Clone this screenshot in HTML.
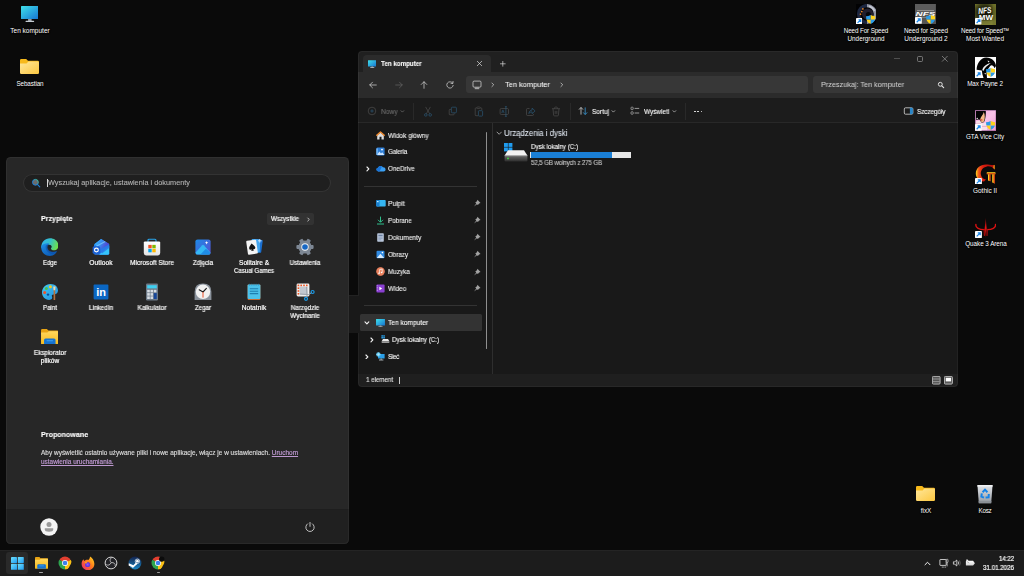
<!DOCTYPE html>
<html lang="pl">
<head>
<meta charset="utf-8">
<title>Pulpit</title>
<style>
html,body{margin:0;padding:0;background:#0a0a0a;}
body{width:1024px;height:576px;overflow:hidden;font-family:"Liberation Sans",sans-serif;}
#screen{position:relative;width:1024px;height:576px;overflow:hidden;background:#0a0a0a;}
#screen div,#screen span,#screen svg{position:absolute;}
.t{white-space:nowrap;display:block;}
.ds{text-shadow:0.5px 0.5px 1px #000,0 0 1.5px #000;}
.t:not(.ds){will-change:transform;}

</style>
</head>
<body>
<div id="screen">
<svg style="left:20.6px;top:5.6px;" width="17.7" height="16.4" viewBox="0 0 18 16.5"><linearGradient id="g1" x1="0" y1="0" x2="1" y2="1"><stop offset="0" stop-color="#3fe0ea"/><stop offset="1" stop-color="#1673d1"/></linearGradient><rect x="0" y="0" width="18" height="13.2" rx=".6" fill="url(#g1)"/><rect x="7.2" y="13.2" width="3.6" height="2" fill="#9aa3ab"/><rect x="4.6" y="15" width="8.8" height="1.2" rx=".5" fill="#c5ccd2"/></svg>
<span class="t ds" style="left:29.5px;top:26.98px;font-size:7px;line-height:8.75px;color:#fff;letter-spacing:0.000px;transform:translateX(-50%) scaleX(0.929);transform-origin:50% 50%;">Ten komputer</span>
<svg style="left:20px;top:59.3px;" width="19" height="15" viewBox="0 0 19 15"><linearGradient id="g2" x1="0" y1="0" x2="1" y2="1"><stop offset="0" stop-color="#ffe79a"/><stop offset="1" stop-color="#fcc740"/></linearGradient><path d="M0 1.2Q0 0 1.2 0H6.2L8 1.8H17.8Q19 1.8 19 3V6H0Z" fill="#f7b91b"/><path d="M0 4.4L6.6 4.4L8.4 2.6H17.8Q19 2.6 19 3.8V13.8Q19 15 17.8 15H1.2Q0 15 0 13.8Z" fill="url(#g2)"/></svg>
<span class="t ds" style="left:29.5px;top:80.23px;font-size:7px;line-height:8.75px;color:#fff;letter-spacing:-0.127px;transform:translateX(-50%) scaleX(0.900);transform-origin:50% 50%;">Sebastian</span>
<svg style="left:855.6px;top:4.1px;" width="20.7" height="20.3" viewBox="0 0 20.7 20.3"><rect width="20.7" height="20.3" fill="#020203"/><path d="M11 1.6A8.4 8.4 0 0 0 11 18.4" fill="none" stroke="#1d2740" stroke-width="3.4"/><path d="M11 1.6A8.4 8.4 0 0 1 11 18.4" fill="none" stroke="#9296a4" stroke-width="3.2"/><path d="M13 2.2A8.2 8.2 0 0 1 18.6 7" fill="none" stroke="#c4c8d4" stroke-width="1.6"/><circle cx="11.6" cy="10" r="5.6" fill="#211f2e"/><circle cx="12.4" cy="10.6" r="2.6" fill="#06060a"/><circle cx="6.9" cy="4.9" r=".85" fill="#f08a2a"/><circle cx="5.8" cy="7.6" r=".85" fill="#f08a2a"/><circle cx="4.5" cy="10.2" r=".85" fill="#e07a22"/></svg>
<svg style="left:855.6px;top:18.1px;" width="6.3" height="6.3" viewBox="0 0 8 8"><rect width="8" height="8" rx=".5" fill="#fdfdfd"/><path d="M2 6.2L5.2 3M3.2 2.2H6V5" fill="none" stroke="#1a86e8" stroke-width="1.5"/></svg>
<svg style="left:866.3px;top:14.8px;" width="9.5" height="9.0" viewBox="0 0 10 10" preserveAspectRatio="none"><clipPath id="g3"><path d="M5 0C6.6 .9 8.4 1.3 10 1.3C10 5.6 8.6 8.4 5 10C1.4 8.4 0 5.6 0 1.3C1.6 1.3 3.4 .9 5 0Z"/></clipPath><g clip-path="url(#g3)"><rect width="5" height="5.2" fill="#2a9be6"/><rect x="5" width="5" height="5.2" fill="#ffd21a"/><rect y="5.2" width="5" height="4.8" fill="#ffd21a"/><rect x="5" y="5.2" width="5" height="4.8" fill="#2a9be6"/></g></svg>
<span class="t ds" style="left:866px;top:26.98px;font-size:7px;line-height:8.75px;color:#fff;letter-spacing:-0.138px;transform:translateX(-50%) scaleX(0.900);transform-origin:50% 50%;">Need For Speed</span>
<span class="t ds" style="left:866px;top:34.98px;font-size:7px;line-height:8.75px;color:#fff;letter-spacing:0.000px;transform:translateX(-50%) scaleX(0.905);transform-origin:50% 50%;">Underground</span>
<svg style="left:915.1px;top:3.9px;" width="20.9" height="20.4" viewBox="0 0 20.9 20.4"><rect width="20.9" height="20.4" fill="#5c5c5c"/><rect y="12.6" width="20.9" height="7.8" fill="#545454"/><rect x="2" y="6.1" width="17" height=".55" fill="#bdbdbd"/><rect x="7" y="13" width="5" height=".5" fill="#a8a8a8"/><text x="10.4" y="11.9" font-family="Liberation Sans, sans-serif" font-size="6" font-weight="700" font-style="italic" fill="#fff" text-anchor="middle" textLength="19.6" lengthAdjust="spacingAndGlyphs">NFS</text></svg>
<svg style="left:915.1px;top:17.4px;" width="6.8" height="6.8" viewBox="0 0 8 8"><rect width="8" height="8" rx=".5" fill="#fdfdfd"/><path d="M2 6.2L5.2 3M3.2 2.2H6V5" fill="none" stroke="#1a86e8" stroke-width="1.5"/></svg>
<svg style="left:926.0px;top:14.8px;" width="9.5" height="9.0" viewBox="0 0 10 10" preserveAspectRatio="none"><clipPath id="g4"><path d="M5 0C6.6 .9 8.4 1.3 10 1.3C10 5.6 8.6 8.4 5 10C1.4 8.4 0 5.6 0 1.3C1.6 1.3 3.4 .9 5 0Z"/></clipPath><g clip-path="url(#g4)"><rect width="5" height="5.2" fill="#2a9be6"/><rect x="5" width="5" height="5.2" fill="#ffd21a"/><rect y="5.2" width="5" height="4.8" fill="#ffd21a"/><rect x="5" y="5.2" width="5" height="4.8" fill="#2a9be6"/></g></svg>
<span class="t ds" style="left:925.5px;top:26.98px;font-size:7px;line-height:8.75px;color:#fff;letter-spacing:-0.011px;transform:translateX(-50%) scaleX(0.900);transform-origin:50% 50%;">Need for Speed</span>
<span class="t ds" style="left:925.5px;top:34.98px;font-size:7px;line-height:8.75px;color:#fff;letter-spacing:0.000px;transform:translateX(-50%) scaleX(0.931);transform-origin:50% 50%;">Underground 2</span>
<svg style="left:974.9px;top:3.6px;" width="21.3" height="21.2" viewBox="0 0 21.3 21.2"><radialGradient id="g5" cx=".45" cy=".42" r=".6"><stop offset="0" stop-color="#0c0c06"/><stop offset=".55" stop-color="#2a2b10"/><stop offset="1" stop-color="#70722a"/></radialGradient><rect width="21.3" height="21.2" fill="url(#g5)"/><rect x="7" y="16.4" width="14.3" height="4.8" fill="#85873a" opacity=".75"/><rect x="17.6" y="0" width="3.7" height="21.2" fill="#6e7028" opacity=".55"/><text x="9.8" y="9.4" font-family="Liberation Sans, sans-serif" font-size="8.4" font-weight="700" font-style="italic" fill="#fff" text-anchor="middle" textLength="13.4" lengthAdjust="spacingAndGlyphs" transform="rotate(-6 9.8 6)">NFS</text><text x="10.9" y="15.9" font-family="Liberation Sans, sans-serif" font-size="6.4" font-weight="700" fill="#fff" text-anchor="middle" textLength="14.2" lengthAdjust="spacingAndGlyphs">MW</text></svg>
<svg style="left:975.1px;top:18.0px;" width="6.5" height="6.5" viewBox="0 0 8 8"><rect width="8" height="8" rx=".5" fill="#fdfdfd"/><path d="M2 6.2L5.2 3M3.2 2.2H6V5" fill="none" stroke="#1a86e8" stroke-width="1.5"/></svg>
<span class="t ds" style="left:985.2px;top:26.88px;font-size:7px;line-height:8.75px;color:#fff;letter-spacing:-0.181px;transform:translateX(-50%) scaleX(0.900);transform-origin:50% 50%;">Need for Speed™</span>
<span class="t ds" style="left:984.8px;top:34.78px;font-size:7px;line-height:8.75px;color:#fff;letter-spacing:0.000px;transform:translateX(-50%) scaleX(0.927);transform-origin:50% 50%;">Most Wanted</span>
<svg style="left:974.9px;top:56.9px;" width="21.3" height="21.2" viewBox="0 0 21.3 21.2"><rect width="21.3" height="21.2" fill="#fdfdfd"/><path d="M1.6 12.8C1.8 6 6 .6 11.2 .5C16.6 .5 20.6 4.4 21 9L19.6 11.2C18.2 8.2 16.4 7.6 15 9.2C13.6 11 12.4 13 11.6 15.2L12 21.2H8.6C7.6 18.4 7 15.8 6.8 13.4Z" fill="#030303"/><path d="M15.8 6C12 6.8 8.6 9 7.4 12.2C7.4 13.4 8 14 8.6 13.8C9.4 11 12.4 8.6 15.8 6Z" fill="#f4f4f4"/><path d="M12.6 3.6L14.6 4.2L13.2 5.4Z" fill="#e8e8e8"/><path d="M9 16.6L11 16V17.4Z" fill="#d0d0d0"/></svg>
<svg style="left:975.1px;top:71.1px;" width="6.7" height="6.7" viewBox="0 0 8 8"><rect width="8" height="8" rx=".5" fill="#fdfdfd"/><path d="M2 6.2L5.2 3M3.2 2.2H6V5" fill="none" stroke="#1a86e8" stroke-width="1.5"/></svg>
<svg style="left:986.0px;top:68.1px;" width="9.4" height="8.9" viewBox="0 0 10 10" preserveAspectRatio="none"><clipPath id="g6"><path d="M5 0C6.6 .9 8.4 1.3 10 1.3C10 5.6 8.6 8.4 5 10C1.4 8.4 0 5.6 0 1.3C1.6 1.3 3.4 .9 5 0Z"/></clipPath><g clip-path="url(#g6)"><rect width="5" height="5.2" fill="#2a9be6"/><rect x="5" width="5" height="5.2" fill="#ffd21a"/><rect y="5.2" width="5" height="4.8" fill="#ffd21a"/><rect x="5" y="5.2" width="5" height="4.8" fill="#2a9be6"/></g></svg>
<span class="t ds" style="left:985.4px;top:80.23px;font-size:7px;line-height:8.75px;color:#fff;letter-spacing:-0.119px;transform:translateX(-50%) scaleX(0.900);transform-origin:50% 50%;">Max Payne 2</span>
<svg style="left:974.9px;top:110.1px;" width="21.3" height="21" viewBox="0 0 21.3 21"><linearGradient id="g7" x1="0" y1="0" x2="1" y2="1"><stop offset="0" stop-color="#f6a8de"/><stop offset=".5" stop-color="#f9c2e8"/><stop offset="1" stop-color="#f09ad4"/></linearGradient><rect width="21.3" height="21" fill="url(#g7)"/><path d="M.5 11.5L5 10.6L8 13.2L12 13V20.6H.5Z" fill="#f7dfe8"/><path d="M.6 14H6M7 16.4H12M1 18.6H7" stroke="#e8a6c8" stroke-width=".9"/><path d="M1 .8H10.8C11 4.4 10.6 7.4 9.8 10.4C9 12.4 7.6 12.8 6.4 12.4L4.4 9.6L1 9.8Z" fill="#030303"/><path d="M8.8 2C10.2 5 10 8 9.2 11C8.4 12.6 6.6 12.6 5.8 11.2C4.8 9.6 5.4 7.6 6.6 6.2C7.6 5 8.4 3.6 8.8 2Z" fill="#f2b888"/><ellipse cx="6.5" cy="9.9" rx="1" ry=".7" fill="#e0301e"/><circle cx="2.2" cy="8.4" r=".7" fill="#fff"/><rect x=".3" y=".3" width="20.7" height="20.4" fill="none" stroke="#8a5a8c" stroke-width=".6"/></svg>
<svg style="left:975.1px;top:124.3px;" width="6.7" height="6.7" viewBox="0 0 8 8"><rect width="8" height="8" rx=".5" fill="#fdfdfd"/><path d="M2 6.2L5.2 3M3.2 2.2H6V5" fill="none" stroke="#1a86e8" stroke-width="1.5"/></svg>
<svg style="left:986.0px;top:121.2px;" width="9.4" height="8.9" viewBox="0 0 10 10" preserveAspectRatio="none"><clipPath id="g8"><path d="M5 0C6.6 .9 8.4 1.3 10 1.3C10 5.6 8.6 8.4 5 10C1.4 8.4 0 5.6 0 1.3C1.6 1.3 3.4 .9 5 0Z"/></clipPath><g clip-path="url(#g8)"><rect width="5" height="5.2" fill="#2a9be6"/><rect x="5" width="5" height="5.2" fill="#ffd21a"/><rect y="5.2" width="5" height="4.8" fill="#ffd21a"/><rect x="5" y="5.2" width="5" height="4.8" fill="#2a9be6"/></g></svg>
<span class="t ds" style="left:985.4px;top:133.49px;font-size:7px;line-height:8.75px;color:#fff;letter-spacing:-0.054px;transform:translateX(-50%) scaleX(0.900);transform-origin:50% 50%;">GTA Vice City</span>
<svg style="left:975px;top:163.5px;" width="21" height="21" viewBox="0 0 21 21"><linearGradient id="g9" x1="0" y1="0" x2="1" y2="0"><stop offset="0" stop-color="#ffd81e"/><stop offset=".16" stop-color="#f0541a"/><stop offset=".4" stop-color="#d81c10"/><stop offset="1" stop-color="#a80c08"/></linearGradient><path d="M19.4 .8L19.6 5.8C17.8 3 14.8 2 12 2.4C7.8 3.2 5.4 6.6 5.8 10.2C6.2 13.2 8.2 15.2 11 15.6L9 17.6C4.2 17 .8 13.6 .8 9.4C.8 4.2 5.2 .4 11 .4C14.2 .4 17 1.4 19.4 .8Z" fill="url(#g9)"/><path d="M18.6 1.2L19.6 1V5.4L18.4 4Z" fill="#f8b21c"/><rect x="11.8" y="8.2" width="8.6" height="2" fill="#ffd21e"/><rect x="11.8" y="9.3" width="8.6" height=".9" fill="#cc2410"/><path d="M13 10.2H15.4V17.2L13 16.4Z" fill="#ffc81e"/><path d="M14.3 10.2H15.4V17.2L14.3 16.8Z" fill="#cc2410"/><path d="M17.2 10.2H19.8V19.6L17.2 18.4Z" fill="#ffc81e"/><path d="M18.6 10.2H19.8V19.6L18.6 19Z" fill="#cc2410"/></svg>
<svg style="left:975px;top:177.5px;" width="6.9" height="6.9" viewBox="0 0 8 8"><rect width="8" height="8" rx=".5" fill="#fdfdfd"/><path d="M2 6.2L5.2 3M3.2 2.2H6V5" fill="none" stroke="#1a86e8" stroke-width="1.5"/></svg>
<span class="t ds" style="left:985.2px;top:186.99px;font-size:7px;line-height:8.75px;color:#fff;letter-spacing:0.000px;transform:translateX(-50%) scaleX(0.920);transform-origin:50% 50%;">Gothic II</span>
<svg style="left:975px;top:217.5px;" width="21.4" height="21" viewBox="0 0 21.4 21"><linearGradient id="g10" x1="0" y1="0" x2="0" y2="1"><stop offset="0" stop-color="#6a0606"/><stop offset=".5" stop-color="#e81414"/><stop offset="1" stop-color="#5a0404"/></linearGradient><g fill="none" stroke="#dc1212" stroke-linecap="round"><path d="M.9 6.4C.2 10 4.6 11.5 9.2 11.7" stroke-width="1.35"/><path d="M20.5 6.4C21.2 10 16.8 11.5 12.2 11.7" stroke-width="1.35"/><path d="M9.1 11.4L9.4 17.4M12.3 11.4L12 17.4" stroke="#b40c0c" stroke-width="1.1"/></g><path d="M10.7 0L11.7 10.5L10.7 19.8L9.7 10.5Z" fill="url(#g10)"/></svg>
<svg style="left:975px;top:231.1px;" width="6.9" height="6.9" viewBox="0 0 8 8"><rect width="8" height="8" rx=".5" fill="#fdfdfd"/><path d="M2 6.2L5.2 3M3.2 2.2H6V5" fill="none" stroke="#1a86e8" stroke-width="1.5"/></svg>
<span class="t ds" style="left:985.5px;top:240.49px;font-size:7px;line-height:8.75px;color:#fff;letter-spacing:-0.046px;transform:translateX(-50%) scaleX(0.900);transform-origin:50% 50%;">Quake 3 Arena</span>
<svg style="left:916px;top:486px;" width="19" height="15" viewBox="0 0 19 15"><linearGradient id="g11" x1="0" y1="0" x2="1" y2="1"><stop offset="0" stop-color="#ffe79a"/><stop offset="1" stop-color="#fcc740"/></linearGradient><path d="M0 1.2Q0 0 1.2 0H6.2L8 1.8H17.8Q19 1.8 19 3V6H0Z" fill="#f7b91b"/><path d="M0 4.4L6.6 4.4L8.4 2.6H17.8Q19 2.6 19 3.8V13.8Q19 15 17.8 15H1.2Q0 15 0 13.8Z" fill="url(#g11)"/></svg>
<span class="t ds" style="left:925.6px;top:507.09px;font-size:7px;line-height:8.75px;color:#fff;letter-spacing:0.000px;transform:translateX(-50%) scaleX(0.908);transform-origin:50% 50%;">fixX</span>
<svg style="left:977.2px;top:485px;" width="16" height="18.5" viewBox="0 0 16 18.5"><linearGradient id="g12" x1="0" y1="0" x2="0" y2="1"><stop offset="0" stop-color="#dfe2e6"/><stop offset=".8" stop-color="#a4a9b0"/><stop offset="1" stop-color="#7c8188"/></linearGradient><path d="M.5 .8H15.5L14.2 18.2H1.8Z" fill="url(#g12)"/><rect x=".2" y="0" width="15.6" height="1.5" rx=".6" fill="#f2f3f5"/><path d="M1.6 16L1.8 18.2H14.2L14.4 16Z" fill="#8a8f96"/><g fill="none" stroke="#1583e8" stroke-width="2"><path d="M5.6 7.2L8 4.6L10.4 7.2"/><path d="M11.8 9L11.6 12.2L8.6 12.4"/><path d="M7 12.6L4.4 11.6L4.8 8.4"/></g></svg>
<span class="t ds" style="left:985px;top:507.09px;font-size:7px;line-height:8.75px;color:#fff;letter-spacing:-0.280px;transform:translateX(-50%) scaleX(0.900);transform-origin:50% 50%;">Kosz</span>
<div id="win" style="left:358.3px;top:50.7px;width:599.3px;height:336.2px;background:#191919;border-radius:4px;overflow:hidden;">
<div style="left:-0.30000000000001137px;top:0.29999999999999716px;width:600px;height:21px;background:#202020;"></div>
<div style="left:4.699999999999989px;top:4.299999999999997px;width:128px;height:17px;background:#2b2b2b;border-radius:4px 4px 0 0;"></div>
<div style="left:-0.30000000000001137px;top:21.299999999999997px;width:600px;height:26px;background:#2b2b2b;"></div>
<div style="left:107.69999999999999px;top:25.299999999999997px;width:342px;height:17.5px;background:#373737;border-radius:3px;"></div>
<div style="left:454.7px;top:25.299999999999997px;width:138px;height:17.5px;background:#373737;border-radius:3px;"></div>
<div style="left:-0.30000000000001137px;top:47.3px;width:600px;height:24.5px;background:#1c1c1c;"></div>
<div style="left:-0.30000000000001137px;top:71.6px;width:600px;height:0.8px;background:#282828;"></div>
<div style="left:133.3px;top:72.3px;width:0.8px;height:251px;background:#2e2e2e;"></div>
<div style="left:127.69999999999999px;top:81.3px;width:1px;height:217px;background:#8f8f8f;border-radius:1px;"></div>
<div style="left:5.699999999999989px;top:135.5px;width:113.5px;height:0.7px;background:#333;"></div>
<div style="left:5.699999999999989px;top:254.5px;width:113.5px;height:0.7px;background:#333;"></div>
<div style="left:1.5px;top:263.7px;width:122.2px;height:16.6px;background:#333333;border-radius:1.5px;"></div>
<div style="left:-0.30000000000001137px;top:323.3px;width:600px;height:13.2px;background:#1f1f1f;"></div>
<div style="left:0;top:0;right:0;bottom:0;border:0.7px solid rgba(255,255,255,.045);border-radius:4px;"></div>
</div>
<svg style="left:367.5px;top:59.5px;" width="8.5" height="8.3" viewBox="0 0 18 16.5"><linearGradient id="g13" x1="0" y1="0" x2="1" y2="1"><stop offset="0" stop-color="#3fe0ea"/><stop offset="1" stop-color="#1673d1"/></linearGradient><rect x="0" y="0" width="18" height="13.2" rx=".6" fill="url(#g13)"/><rect x="7.2" y="13.2" width="3.6" height="2" fill="#9aa3ab"/><rect x="4.6" y="15" width="8.8" height="1.2" rx=".5" fill="#c5ccd2"/></svg>
<span class="t" style="left:381.4px;top:60.31px;font-size:6.8px;line-height:8.5px;color:#fff;font-weight:700;-webkit-text-stroke:0.1px;letter-spacing:0.000px;transform:scaleX(0.914);transform-origin:0 50%;">Ten komputer</span>
<svg style="left:475.9px;top:59.9px;" width="7.0" height="7.0" viewBox="-3.5 -3.5 7.0 7.0"><path d="M-2.5 -2.5L2.5 2.5M2.5 -2.5L-2.5 2.5" stroke="#e6e6e6" stroke-width="0.65" fill="none"/></svg>
<svg style="left:499.0px;top:59.7px;" width="7.6" height="7.6" viewBox="-3.8 -3.8 7.6 7.6"><path d="M-2.8 0H2.8M0 -2.8V2.8" stroke="#e6e6e6" stroke-width="0.65" fill="none"/></svg>
<svg style="left:893.5px;top:58.3px;" width="6" height="1" viewBox="0 0 6 1"><rect width="6" height="0.8" fill="#5c5c5c"/></svg>
<svg style="left:917.4px;top:55.7px;" width="6" height="6" viewBox="0 0 6 6"><rect x=".5" y=".5" width="5" height="5" rx="1" fill="none" stroke="#8a8a8a" stroke-width=".8"/></svg>
<svg style="left:941.2px;top:54.9px;" width="7.6" height="7.6" viewBox="-3.8 -3.8 7.6 7.6"><path d="M-2.8 -2.8L2.8 2.8M2.8 -2.8L-2.8 2.8" stroke="#8a8a8a" stroke-width="0.8" fill="none"/></svg>
<svg style="left:367.6px;top:79.6px;" width="10" height="10" viewBox="-5 -5 10 10"><path transform="rotate(0)" d="M3.3 0H-3.1M-.5 -2.8L-3.3 0L-.5 2.8" stroke="#e8e8e8" stroke-width=".65" fill="none" stroke-linecap="round" stroke-linejoin="round"/></svg>
<svg style="left:393.5px;top:79.6px;" width="10" height="10" viewBox="-5 -5 10 10"><path transform="rotate(180)" d="M3.3 0H-3.1M-.5 -2.8L-3.3 0L-.5 2.8" stroke="#6a6a6a" stroke-width=".65" fill="none" stroke-linecap="round" stroke-linejoin="round"/></svg>
<svg style="left:419px;top:79.6px;" width="10" height="10" viewBox="-5 -5 10 10"><path transform="rotate(90)" d="M3.3 0H-3.1M-.5 -2.8L-3.3 0L-.5 2.8" stroke="#e8e8e8" stroke-width=".65" fill="none" stroke-linecap="round" stroke-linejoin="round"/></svg>
<svg style="left:444.6px;top:79.6px;" width="10" height="10" viewBox="-5 -5 10 10"><path d="M2.6 -2A3.2 3.2 0 1 0 3.2 .4" stroke="#e8e8e8" stroke-width=".65" fill="none" stroke-linecap="round"/><path d="M3 -3.6V-1.6H1" stroke="#e8e8e8" stroke-width=".65" fill="none" stroke-linecap="round" stroke-linejoin="round"/></svg>
<svg style="left:472px;top:79.8px;" width="10" height="10" viewBox="-5 -5 10 10"><rect x="-4" y="-3.9" width="8" height="6.1" rx="1.1" fill="none" stroke="#e0e0e0" stroke-width=".7"/><path d="M-2.3 3.7H2.3M-1 2.3V3.5M1 2.3V3.5" stroke="#e0e0e0" stroke-width=".7" fill="none"/></svg>
<svg style="left:490.0px;top:82.0px;" width="5.6" height="5.6" viewBox="-2.8 -2.8 5.6 5.6"><path transform="rotate(0)" d="M-0.9 -1.8L0.9 0L-0.9 1.8" stroke="#e0e0e0" stroke-width="0.7" fill="none" stroke-linecap="round" stroke-linejoin="round"/></svg>
<span class="t" style="left:504.8px;top:79.94px;font-size:8px;line-height:10.0px;color:#fff;-webkit-text-stroke:0.05px;letter-spacing:0.000px;transform:scaleX(0.928);transform-origin:0 50%;">Ten komputer</span>
<svg style="left:558.7px;top:82.0px;" width="5.6" height="5.6" viewBox="-2.8 -2.8 5.6 5.6"><path transform="rotate(0)" d="M-0.9 -1.8L0.9 0L-0.9 1.8" stroke="#e0e0e0" stroke-width="0.7" fill="none" stroke-linecap="round" stroke-linejoin="round"/></svg>
<span class="t" style="left:820.6px;top:80.04px;font-size:8px;line-height:10.0px;color:#d0d0d0;-webkit-text-stroke:0.05px;letter-spacing:0.000px;transform:scaleX(0.905);transform-origin:0 50%;">Przeszukaj: Ten komputer</span>
<svg style="left:936.2px;top:79.8px;" width="10" height="10" viewBox="-5 -5 10 10"><circle cx="-.7" cy="-.7" r="1.95" fill="none" stroke="#e8e8e8" stroke-width=".95"/><path d="M.8 .8L2.7 2.7" stroke="#e8e8e8" stroke-width="1.05" stroke-linecap="round"/></svg>
<svg style="left:367px;top:106px;" width="10" height="10" viewBox="-5 -5 10 10"><circle r="3.8" fill="none" stroke="#4e4e4e" stroke-width=".7"/><path d="M-1.7 0H1.7M0 -1.7V1.7" stroke="#2b5876" stroke-width=".7"/></svg>
<span class="t" style="left:381px;top:106.86px;font-size:7.2px;line-height:9.0px;color:#6d6d6d;-webkit-text-stroke:0.1px;letter-spacing:0.000px;transform:scaleX(0.917);transform-origin:0 50%;">Nowy</span>
<svg style="left:400.1px;top:109.1px;" width="4.8" height="4.8" viewBox="-2.4 -2.4 4.8 4.8"><path transform="rotate(90)" d="M-0.7 -1.4L0.7 0L-0.7 1.4" stroke="#6d6d6d" stroke-width="0.8" fill="none" stroke-linecap="round" stroke-linejoin="round"/></svg>
<div style="left:413.3px;top:102.5px;width:0.7px;height:17px;background:#292929;"></div>
<svg style="left:423px;top:105.5px;" width="10" height="11" viewBox="-5 -5.5 10 11"><path d="M-2.4 -4.6L1.6 2.2M2.4 -4.6L-1.6 2.2" stroke="#4e4e4e" stroke-width=".7" fill="none"/><circle cx="-2.2" cy="3.4" r="1.3" fill="none" stroke="#2b5876" stroke-width=".7"/><circle cx="2.2" cy="3.4" r="1.3" fill="none" stroke="#2b5876" stroke-width=".7"/></svg>
<svg style="left:448.3px;top:105.8px;" width="10" height="10" viewBox="-5 -5 10 10"><path d="M-2 -1.6H-3Q-3.8 -1.6 -3.8 -.8V3Q-3.8 3.8 -3 3.8H.4Q1.2 3.8 1.2 3V2.2" stroke="#4e4e4e" stroke-width=".7" fill="none"/><rect x="-1.6" y="-3.8" width="5" height="5.6" rx=".9" fill="none" stroke="#2b5876" stroke-width=".7"/></svg>
<svg style="left:474px;top:105.5px;" width="10" height="11" viewBox="-5 -5.5 10 11"><path d="M-1 4.2H-3Q-3.8 4.2 -3.8 3.4V-2.8Q-3.8 -3.6 -3 -3.6H2Q2.8 -3.6 2.8 -2.8V-1.4" stroke="#4e4e4e" stroke-width=".7" fill="none"/><rect x="-2" y="-4.6" width="3" height="1.6" rx=".6" fill="#1c1c1c" stroke="#4e4e4e" stroke-width=".6"/><rect x="-.6" y="-.8" width="4.2" height="5.4" rx=".8" fill="none" stroke="#2b5876" stroke-width=".7"/></svg>
<svg style="left:499.1px;top:105.5px;" width="11" height="11" viewBox="-5.5 -5.5 11 11"><rect x="-4.4" y="-3" width="8.4" height="6" rx="1.2" fill="none" stroke="#4e4e4e" stroke-width=".7"/><path d="M1.4 -4.8V4.8M.4 -4.8H2.4M.4 4.8H2.4" stroke="#2b5876" stroke-width=".7" fill="none"/><path d="M-2.8 1.4L-1.6 -1.6L-.4 1.4M-2.3 .5H-.9" stroke="#2b5876" stroke-width=".6" fill="none"/></svg>
<svg style="left:524.5px;top:105.5px;" width="11" height="11" viewBox="-5.5 -5.5 11 11"><path d="M-1 -3H-3Q-4 -3 -4 -2V3Q-4 4 -3 4H2Q3 4 3 3V2.4" stroke="#4e4e4e" stroke-width=".7" fill="none"/><path d="M-1.6 2C-1.4 -.4 .2 -1.4 1.6 -1.4V-3.4L4.6 -.6L1.6 2.2V.4C.4 .4 -.8 .8 -1.6 2Z" stroke="#2b5876" stroke-width=".7" fill="none" stroke-linejoin="round"/></svg>
<svg style="left:550.7px;top:105.5px;" width="10" height="11" viewBox="-5 -5.5 10 11"><path d="M-4 -2.8H4M-1.4 -2.8V-3.6Q-1.4 -4.4 -.6 -4.4H.6Q1.4 -4.4 1.4 -3.6V-2.8M-3 -2.8L-2.4 3.6Q-2.3 4.4 -1.5 4.4H1.5Q2.3 4.4 2.4 3.6L3 -2.8M-.8 -.6V2.4M.8 -.6V2.4" stroke="#4e4e4e" stroke-width=".7" fill="none"/></svg>
<div style="left:569.8px;top:102.5px;width:0.7px;height:17px;background:#292929;"></div>
<svg style="left:577.8px;top:106px;" width="10" height="10" viewBox="-5 -5 10 10"><path d="M-2 3.6V-3.4M-4 -1.4L-2 -3.6L0 -1.4" stroke="#d0d0d0" stroke-width=".8" fill="none" stroke-linejoin="round"/><path d="M2.2 -3.6V3.4M.2 1.4L2.2 3.6L4.2 1.4" stroke="#3c9ad8" stroke-width=".8" fill="none" stroke-linejoin="round"/></svg>
<span class="t" style="left:591.5px;top:106.86px;font-size:7.2px;line-height:9.0px;color:#fff;-webkit-text-stroke:0.1px;letter-spacing:0.000px;transform:scaleX(0.905);transform-origin:0 50%;">Sortuj</span>
<svg style="left:611.4px;top:109.1px;" width="4.8" height="4.8" viewBox="-2.4 -2.4 4.8 4.8"><path transform="rotate(90)" d="M-0.7 -1.4L0.7 0L-0.7 1.4" stroke="#bbb" stroke-width="0.8" fill="none" stroke-linecap="round" stroke-linejoin="round"/></svg>
<svg style="left:630px;top:106px;" width="10" height="10" viewBox="-5 -5 10 10"><rect x="-4" y="-3.8" width="2.2" height="2.4" rx=".6" fill="none" stroke="#d0d0d0" stroke-width=".6"/><rect x="-4" y=".8" width="2.2" height="2.4" rx=".6" fill="none" stroke="#d0d0d0" stroke-width=".6"/><path d="M-.4 -2.6H4.2M-.4 2H4.2" stroke="#d0d0d0" stroke-width=".7"/></svg>
<span class="t" style="left:643.8px;top:106.86px;font-size:7.2px;line-height:9.0px;color:#fff;-webkit-text-stroke:0.1px;letter-spacing:-0.037px;transform:scaleX(0.900);transform-origin:0 50%;">Wyświetl</span>
<svg style="left:672.2px;top:109.1px;" width="4.8" height="4.8" viewBox="-2.4 -2.4 4.8 4.8"><path transform="rotate(90)" d="M-0.7 -1.4L0.7 0L-0.7 1.4" stroke="#bbb" stroke-width="0.8" fill="none" stroke-linecap="round" stroke-linejoin="round"/></svg>
<div style="left:685px;top:102.5px;width:0.7px;height:17px;background:#292929;"></div>
<div style="left:694.0px;top:110.5px;width:1.6px;height:1.6px;background:#f0f0f0;border-radius:1px;"></div>
<div style="left:697.4px;top:110.5px;width:1.6px;height:1.6px;background:#f0f0f0;border-radius:1px;"></div>
<div style="left:700.8px;top:110.5px;width:1.6px;height:1.6px;background:#f0f0f0;border-radius:1px;"></div>
<svg style="left:902.9px;top:106px;" width="11" height="10" viewBox="-5.5 -5 11 10"><rect x="-4.2" y="-3.2" width="8.6" height="6.4" rx="1.2" fill="none" stroke="#d8d8d8" stroke-width=".8"/><path d="M1.4 -3.2H3.2Q4.4 -3.2 4.4 -2V2Q4.4 3.2 3.2 3.2H1.4Z" fill="#2a86c8"/></svg>
<span class="t" style="left:916.9px;top:106.86px;font-size:7.2px;line-height:9.0px;color:#fff;-webkit-text-stroke:0.1px;letter-spacing:-0.147px;transform:scaleX(0.900);transform-origin:0 50%;">Szczegóły</span>
<svg style="left:376.0px;top:131.1px;" width="9" height="9" viewBox="0 0 9 9"><path d="M1.2 4.2L4.5 1.4L7.8 4.2V8.4H5.5V5.8H3.5V8.4H1.2Z" fill="#dcdcdc"/><path d="M.3 4.7L4.5 1L8.7 4.7" fill="none" stroke="#f08a2e" stroke-width="1.3" stroke-linejoin="round"/></svg>
<span class="t" style="left:387.7px;top:132.09px;font-size:7px;line-height:8.75px;color:#f2f2f2;-webkit-text-stroke:0.1px;letter-spacing:0.000px;transform:scaleX(0.940);transform-origin:0 50%;">Widok główny</span>
<svg style="left:376.0px;top:147.1px;" width="9" height="9" viewBox="0 0 9 9"><rect x=".6" y=".4" width="8" height="8" rx="1.2" fill="#2e7fd8"/><path d="M.8 8L3.4 4.6L5 6.4L6.2 5.2L8.4 8Z" fill="#cfe6ff"/><circle cx="6" cy="2.6" r=".9" fill="#fff"/><rect x="0" y="1.2" width="2" height="6.8" rx=".8" fill="#7cc0ff" opacity=".7"/></svg>
<span class="t" style="left:387.7px;top:148.09px;font-size:7px;line-height:8.75px;color:#f2f2f2;-webkit-text-stroke:0.1px;letter-spacing:-0.178px;transform:scaleX(0.900);transform-origin:0 50%;">Galeria</span>
<svg style="left:375.5px;top:164.1px;" width="10" height="9" viewBox="0 0 10 9"><path d="M2.4 7.4Q.4 7.4 .4 5.6Q.4 4 2 3.8Q2.6 2 4.6 2Q6.2 2 6.9 3.3Q9.6 3.2 9.6 5.4Q9.6 7.4 7.6 7.4Z" fill="#3aa0f4"/><path d="M2.4 7.4Q.4 7.4 .4 5.6Q.4 4 2 3.8Q2.6 2 4.6 2Q5.4 2 6 2.4L3.6 7.4Z" fill="#1a74d8"/></svg>
<span class="t" style="left:387.7px;top:165.09px;font-size:7px;line-height:8.75px;color:#f2f2f2;-webkit-text-stroke:0.1px;letter-spacing:0.000px;transform:scaleX(0.903);transform-origin:0 50%;">OneDrive</span>
<svg style="left:375.5px;top:198.9px;" width="10" height="9" viewBox="0 0 10 9"><rect x=".3" y="1" width="9.4" height="6.6" rx=".8" fill="#35b6f2"/><rect x=".3" y="1" width="3.2" height="6.6" rx=".8" fill="#1b7fd0"/><rect x="1" y="2" width="1.6" height="1.2" fill="#bfe9ff"/></svg>
<span class="t" style="left:387.7px;top:199.89px;font-size:7px;line-height:8.75px;color:#f2f2f2;-webkit-text-stroke:0.1px;letter-spacing:0.000px;transform:scaleX(0.959);transform-origin:0 50%;">Pulpit</span>
<svg style="left:472.8px;top:199.2px;" width="8.4" height="8.4" viewBox="-3.5 -3.5 7 7"><path d="M.2 -2.8L2.8 -.2L1.6 .2L.6 1.6L-.2 .8L-2.6 2.8L-.8 .2L-1.6 -.6L-.2 -1.6Z" fill="#a2a2a2"/></svg>
<svg style="left:376.0px;top:215.6px;" width="9" height="9" viewBox="0 0 9 9"><path d="M4.5 .6V6M2 3.8L4.5 6.3L7 3.8" stroke="#2fbf8c" stroke-width="1" fill="none"/><path d="M1 8H8" stroke="#2fbf8c" stroke-width="1"/></svg>
<span class="t" style="left:387.7px;top:216.59px;font-size:7px;line-height:8.75px;color:#f2f2f2;-webkit-text-stroke:0.1px;letter-spacing:-0.019px;transform:scaleX(0.900);transform-origin:0 50%;">Pobrane</span>
<svg style="left:472.8px;top:215.9px;" width="8.4" height="8.4" viewBox="-3.5 -3.5 7 7"><path d="M.2 -2.8L2.8 -.2L1.6 .2L.6 1.6L-.2 .8L-2.6 2.8L-.8 .2L-1.6 -.6L-.2 -1.6Z" fill="#a2a2a2"/></svg>
<svg style="left:376.0px;top:232.8px;" width="9" height="9" viewBox="0 0 9 9"><rect x="1.2" y=".3" width="6.6" height="8.4" rx=".8" fill="#b9c6da"/><rect x="2.4" y="1.8" width="4.2" height="1" fill="#5b7396"/><path d="M2.4 4H6.6M2.4 5.4H6.6M2.4 6.8H5.2" stroke="#7a8fb0" stroke-width=".6"/></svg>
<span class="t" style="left:387.7px;top:233.79px;font-size:7px;line-height:8.75px;color:#f2f2f2;-webkit-text-stroke:0.1px;letter-spacing:0.000px;transform:scaleX(0.938);transform-origin:0 50%;">Dokumenty</span>
<svg style="left:472.8px;top:233.1px;" width="8.4" height="8.4" viewBox="-3.5 -3.5 7 7"><path d="M.2 -2.8L2.8 -.2L1.6 .2L.6 1.6L-.2 .8L-2.6 2.8L-.8 .2L-1.6 -.6L-.2 -1.6Z" fill="#a2a2a2"/></svg>
<svg style="left:376.0px;top:250.0px;" width="9" height="9" viewBox="0 0 9 9"><rect x=".5" y=".7" width="8" height="7.6" rx="1" fill="#2f8ae2"/><path d="M.8 8L4.4 3.8L8.2 8Z" fill="#d6ebff"/><circle cx="6.4" cy="2.6" r=".8" fill="#fff"/></svg>
<span class="t" style="left:387.7px;top:250.99px;font-size:7px;line-height:8.75px;color:#f2f2f2;-webkit-text-stroke:0.1px;letter-spacing:-0.075px;transform:scaleX(0.900);transform-origin:0 50%;">Obrazy</span>
<svg style="left:472.8px;top:250.3px;" width="8.4" height="8.4" viewBox="-3.5 -3.5 7 7"><path d="M.2 -2.8L2.8 -.2L1.6 .2L.6 1.6L-.2 .8L-2.6 2.8L-.8 .2L-1.6 -.6L-.2 -1.6Z" fill="#a2a2a2"/></svg>
<svg style="left:376.0px;top:267.2px;" width="9" height="9" viewBox="0 0 9 9"><circle cx="4.5" cy="4.5" r="4.2" fill="#e06a52"/><circle cx="4.5" cy="4.5" r="4.2" fill="#f29a6a" opacity=".5"/><path d="M3.6 6.2V2.6L6.2 2V5.4" stroke="#fff" stroke-width=".7" fill="none"/><circle cx="3" cy="6.2" r=".8" fill="#fff"/><circle cx="5.6" cy="5.5" r=".8" fill="#fff"/></svg>
<span class="t" style="left:387.7px;top:268.19px;font-size:7px;line-height:8.75px;color:#f2f2f2;-webkit-text-stroke:0.1px;letter-spacing:0.000px;transform:scaleX(0.904);transform-origin:0 50%;">Muzyka</span>
<svg style="left:472.8px;top:267.5px;" width="8.4" height="8.4" viewBox="-3.5 -3.5 7 7"><path d="M.2 -2.8L2.8 -.2L1.6 .2L.6 1.6L-.2 .8L-2.6 2.8L-.8 .2L-1.6 -.6L-.2 -1.6Z" fill="#a2a2a2"/></svg>
<svg style="left:376.0px;top:284.0px;" width="9" height="9" viewBox="0 0 9 9"><rect x=".4" y=".6" width="8.2" height="7.8" rx="1" fill="#8a3fd1"/><path d="M3.4 2.8L6.2 4.5L3.4 6.2Z" fill="#fff"/><path d="M1.3 1.4V7.6" stroke="#d9b8ff" stroke-width=".8" stroke-dasharray=".8 .8"/></svg>
<span class="t" style="left:387.7px;top:284.99px;font-size:7px;line-height:8.75px;color:#f2f2f2;-webkit-text-stroke:0.1px;letter-spacing:0.000px;transform:scaleX(0.922);transform-origin:0 50%;">Wideo</span>
<svg style="left:472.8px;top:284.3px;" width="8.4" height="8.4" viewBox="-3.5 -3.5 7 7"><path d="M.2 -2.8L2.8 -.2L1.6 .2L.6 1.6L-.2 .8L-2.6 2.8L-.8 .2L-1.6 -.6L-.2 -1.6Z" fill="#a2a2a2"/></svg>
<svg style="left:364.6px;top:165.9px;" width="5.8" height="5.8" viewBox="-2.9 -2.9 5.8 5.8"><path transform="rotate(0)" d="M-0.95 -1.9L0.95 0L-0.95 1.9" stroke="#f4f4f4" stroke-width="1.15" fill="none" stroke-linecap="round" stroke-linejoin="round"/></svg>
<svg style="left:364.1px;top:319.7px;" width="5.8" height="5.8" viewBox="-2.9 -2.9 5.8 5.8"><path transform="rotate(90)" d="M-0.95 -1.9L0.95 0L-0.95 1.9" stroke="#f4f4f4" stroke-width="1.15" fill="none" stroke-linecap="round" stroke-linejoin="round"/></svg>
<svg style="left:376.0px;top:318.5px;" width="9" height="8.2" viewBox="0 0 18 16.5"><linearGradient id="g14" x1="0" y1="0" x2="1" y2="1"><stop offset="0" stop-color="#3fe0ea"/><stop offset="1" stop-color="#1673d1"/></linearGradient><rect x="0" y="0" width="18" height="13.2" rx=".6" fill="url(#g14)"/><rect x="7.2" y="13.2" width="3.6" height="2" fill="#9aa3ab"/><rect x="4.6" y="15" width="8.8" height="1.2" rx=".5" fill="#c5ccd2"/></svg>
<span class="t" style="left:387.7px;top:318.99px;font-size:7px;line-height:8.75px;color:#fff;-webkit-text-stroke:0.1px;letter-spacing:0.000px;transform:scaleX(0.945);transform-origin:0 50%;">Ten komputer</span>
<svg style="left:368.6px;top:336.9px;" width="5.8" height="5.8" viewBox="-2.9 -2.9 5.8 5.8"><path transform="rotate(0)" d="M-0.95 -1.9L0.95 0L-0.95 1.9" stroke="#f4f4f4" stroke-width="1.15" fill="none" stroke-linecap="round" stroke-linejoin="round"/></svg>
<svg style="left:380.5px;top:334.8px;" width="9" height="9" viewBox="0 0 9 9"><rect x=".4" y=".2" width="1.5" height="1.5" fill="#2aa3ee"/><rect x="2.3" y=".2" width="1.5" height="1.5" fill="#2aa3ee"/><rect x=".4" y="2" width="1.5" height="1.5" fill="#2aa3ee"/><rect x="2.3" y="2" width="1.5" height="1.5" fill="#2aa3ee"/><path d="M2 4L.6 6.2H8.4L7 4Z" fill="#e8e8e8"/><rect x=".6" y="6.2" width="7.8" height="1.8" rx=".4" fill="#9a9a9a"/></svg>
<span class="t" style="left:392px;top:336.29px;font-size:7px;line-height:8.75px;color:#fff;-webkit-text-stroke:0.1px;letter-spacing:-0.040px;transform:scaleX(0.900);transform-origin:0 50%;">Dysk lokalny (C:)</span>
<svg style="left:364.3px;top:353.7px;" width="5.8" height="5.8" viewBox="-2.9 -2.9 5.8 5.8"><path transform="rotate(0)" d="M-0.95 -1.9L0.95 0L-0.95 1.9" stroke="#f4f4f4" stroke-width="1.15" fill="none" stroke-linecap="round" stroke-linejoin="round"/></svg>
<svg style="left:376.2px;top:352.0px;" width="9" height="9" viewBox="0 0 9 9"><rect x="2" y="2" width="6.6" height="4.6" rx=".5" fill="#2a9fe8"/><rect x="4.4" y="6.6" width="1.6" height="1" fill="#9aa3ab"/><rect x="3" y="7.6" width="4.4" height=".8" fill="#c5ccd2"/><circle cx="2.4" cy="2.4" r="2.2" fill="#58c8f4"/><path d="M.4 2.4H4.4M2.4 .4V4.4" stroke="#e8f8ff" stroke-width=".4"/></svg>
<span class="t" style="left:388px;top:352.99px;font-size:7px;line-height:8.75px;color:#fff;-webkit-text-stroke:0.1px;letter-spacing:-0.351px;transform:scaleX(0.900);transform-origin:0 50%;">Sieć</span>
<svg style="left:495.6px;top:130.3px;" width="6.4" height="6.4" viewBox="-3.2 -3.2 6.4 6.4"><path transform="rotate(90)" d="M-1.1 -2.2L1.1 0L-1.1 2.2" stroke="#bbb" stroke-width="0.8" fill="none" stroke-linecap="round" stroke-linejoin="round"/></svg>
<span class="t" style="left:504px;top:129.41px;font-size:8.2px;line-height:10.25px;color:#e4ebf5;-webkit-text-stroke:0.05px;letter-spacing:0.000px;transform:scaleX(0.956);transform-origin:0 50%;">Urządzenia i dyski</span>
<svg style="left:503.5px;top:143px;" width="24" height="19.5" viewBox="0 0 24 19.5"><linearGradient id="g15" x1="0" y1="0" x2="0" y2="1"><stop offset="0" stop-color="#6a6a6a"/><stop offset="1" stop-color="#2c2c2c"/></linearGradient><rect x="0" y="0" width="3.9" height="3.9" fill="#1f9cf0"/><rect x="4.5" y="0" width="3.9" height="3.9" fill="#1f9cf0"/><rect x="0" y="4.5" width="3.9" height="3.9" fill="#1f9cf0"/><rect x="4.5" y="4.5" width="3.9" height="3.9" fill="#1f9cf0"/><path d="M4 7.2H20L23.4 12.6H.6Z" fill="#f2f2f2"/><rect x=".6" y="12.6" width="22.8" height="6" rx=".8" fill="url(#g15)"/><rect x=".6" y="12.4" width="22.8" height=".7" fill="#cfcfcf"/><circle cx="4" cy="15.4" r=".9" fill="#3be03b"/></svg>
<span class="t" style="left:531px;top:143.09px;font-size:7px;line-height:8.75px;color:#fff;-webkit-text-stroke:0.1px;letter-spacing:-0.040px;transform:scaleX(0.900);transform-origin:0 50%;">Dysk lokalny (C:)</span>
<div style="left:530px;top:151.6px;width:100.5px;height:6.8px;background:#e6e6e6;"></div>
<div style="left:530.6px;top:152.2px;width:81px;height:5.6px;background:#1a7fd6;"></div>
<span class="t" style="left:531px;top:159.49px;font-size:7px;line-height:8.75px;color:#c8c8c8;-webkit-text-stroke:0.1px;letter-spacing:-0.215px;transform:scaleX(0.900);transform-origin:0 50%;">52,5 GB wolnych z 275 GB</span>
<span class="t" style="left:366px;top:375.69px;font-size:7px;line-height:8.75px;color:#e6e6e6;-webkit-text-stroke:0.1px;letter-spacing:-0.083px;transform:scaleX(0.900);transform-origin:0 50%;">1 element</span>
<div style="left:399.2px;top:377px;width:0.7px;height:6.5px;background:#ccc;"></div>
<svg style="left:932px;top:376px;" width="8.5" height="8.5" viewBox="0 0 8.5 8.5"><rect x=".4" y=".4" width="7.7" height="7.7" rx="1" fill="#555" stroke="#cfcfcf" stroke-width=".8"/><path d="M1 3H7.5M1 5.6H7.5" stroke="#bdbdbd" stroke-width=".6"/></svg>
<svg style="left:944.4px;top:376px;" width="8.8" height="8.5" viewBox="0 0 8.8 8.5"><rect x=".4" y=".4" width="8" height="7.7" rx="1" fill="#5a5a5a" stroke="#d4d4d4" stroke-width=".8"/><rect x="1.8" y="1.8" width="5.2" height="3.6" fill="#fff"/></svg>
<div id="start" style="left:6.2px;top:156.9px;width:342.6px;height:386.9px;background:#272727;border-radius:4.5px;overflow:hidden;">
<div style="left:0px;top:352.3px;width:343px;height:35px;background:#202020;"></div>
<div style="left:0px;top:352.1px;width:343px;height:0.5px;background:#1e1e1e;"></div>
<div style="left:18.3px;top:17.8px;width:305.6px;height:16px;background:#1f1f1f;border-radius:8px;box-shadow:0 0 0 0.8px #383838;"></div>
<div style="left:261px;top:56px;width:46.6px;height:12.2px;background:#323232;border-radius:2px;"></div>
<div style="left:0;top:0;right:0;bottom:0;border:0.8px solid rgba(255,255,255,.045);border-radius:4.5px;"></div>
</div>
<div style="left:349px;top:294.8px;width:9.5px;height:37.7px;background:#191919;border-top:0.6px solid #222;"></div>
<svg style="left:31px;top:178px;" width="10" height="10" viewBox="-5 -5 10 10"><linearGradient id="g16" x1="1" y1="0" x2="0" y2="1"><stop offset="0" stop-color="#49d18a"/><stop offset=".5" stop-color="#1c8fe0"/><stop offset="1" stop-color="#1770d0"/></linearGradient><circle cx="-.6" cy="-.7" r="2.9" fill="#6b6b6b" stroke="url(#g16)" stroke-width="1"/><path d="M1.6 1.6L3.8 3.9" stroke="#1b7fd8" stroke-width="1.1" stroke-linecap="round"/></svg>
<div style="left:47.3px;top:178.7px;width:0.6px;height:8.6px;background:#d8d8d8;"></div>
<span class="t" style="left:48.3px;top:178.49px;font-size:7.3px;line-height:9.12px;color:#b4b4b4;-webkit-text-stroke:0.1px;letter-spacing:0.012px;">Wyszukaj aplikacje, ustawienia i dokumenty</span>
<span class="t" style="left:40.6px;top:213.99px;font-size:7.3px;line-height:9.12px;color:#fff;font-weight:700;-webkit-text-stroke:0.1px;letter-spacing:0.000px;transform:scaleX(0.971);transform-origin:0 50%;">Przypięte</span>
<span class="t" style="left:271px;top:214.94px;font-size:6.6px;line-height:8.25px;color:#fff;-webkit-text-stroke:0.18px;letter-spacing:0.000px;transform:scaleX(0.944);transform-origin:0 50%;">Wszystkie</span>
<svg style="left:305.5px;top:216.7px;" width="5.0" height="5.0" viewBox="-2.5 -2.5 5.0 5.0"><path transform="rotate(0)" d="M-0.75 -1.5L0.75 0L-0.75 1.5" stroke="#ddd" stroke-width="0.8" fill="none" stroke-linecap="round" stroke-linejoin="round"/></svg>
<svg style="left:40.8px;top:237.7px;" width="17.6" height="18.2" viewBox="0 0 18 18.2"><linearGradient id="g17" x1="0" y1=".2" x2="1" y2=".5"><stop offset="0" stop-color="#2fb4f2"/><stop offset=".5" stop-color="#35c0c8"/><stop offset="1" stop-color="#6fe04a"/></linearGradient><linearGradient id="g18" x1="0" y1="0" x2=".6" y2="1"><stop offset="0" stop-color="#1f8fe8"/><stop offset="1" stop-color="#0c5cb8"/></linearGradient><path d="M.3 9C.3 3.8 4.2 0 9.2 0C14.4 0 17.8 3.6 17.8 7.6C17.8 10.8 15.6 12.4 13.2 12.4C11.4 12.4 10.2 11.6 10.2 10.8C10.2 10 11 9.8 11 8.8C11 7.4 9.8 6.6 8.2 6.6C5 6.6 2 8.4 .3 10Z" fill="url(#g17)"/><path d="M.2 8.6C1.6 6 5.2 4.8 8.4 5.4C6.6 6.6 5.8 8.8 6.6 11C7.8 13.8 11.4 15 16.4 13.4C15 16.4 12.2 18.2 9 18.2C4 18.2 .2 14.2 .2 9.2Z" fill="url(#g18)"/><path d="M4.8 8C4.4 11 6.2 14.6 9.8 15.8C12.4 16.6 15.2 15.4 16.4 13.4C12 14.8 8 13.6 7 10.8C6.4 9.2 7 7.4 8.6 6.2C6.8 6.2 5.2 6.8 4.8 8Z" fill="#0b4ea6" opacity=".6"/><ellipse cx="8.9" cy="8.9" rx="1.4" ry="1.4" fill="#16222e"/></svg>
<span class="t" style="left:49.6px;top:258.79px;font-size:6.6px;line-height:8.25px;color:#fff;-webkit-text-stroke:0.18px;letter-spacing:0.000px;transform:translateX(-50%) scaleX(0.909);transform-origin:50% 50%;">Edge</span>
<svg style="left:91.7px;top:237.7px;" width="18" height="18" viewBox="0 0 18 18"><linearGradient id="g19" x1="0" y1="0" x2="1" y2=".4"><stop offset="0" stop-color="#38c6ff"/><stop offset=".55" stop-color="#3a86ee"/><stop offset="1" stop-color="#5a3ed0"/></linearGradient><linearGradient id="g20" x1="0" y1="0" x2="1" y2="1"><stop offset="0" stop-color="#1f8cf0"/><stop offset="1" stop-color="#2f6ae0"/></linearGradient><path d="M9 1L17.2 6V15.2Q17.2 16.8 15.6 16.8H3.6Q2 16.8 2 15.2V6.4Z" fill="url(#g20)"/><path d="M2.6 6L9.2 1L17.2 6L8 11.6Z" fill="url(#g19)"/><path d="M4.4 8.2L13.2 3.4" stroke="#8fe0ff" stroke-width="1.1" opacity=".6"/><path d="M17.2 8V15.2Q17.2 16.8 15.6 16.8H7L17.2 8Z" fill="#35c4fb"/><path d="M17.2 6.6V10L10 15.6L8 11.6Z" fill="#2a7ae8" opacity=".85"/><rect x=".6" y="8.2" width="7.6" height="7.6" rx="1.5" fill="#1a5fd2"/><circle cx="4.4" cy="12" r="1.9" fill="none" stroke="#fff" stroke-width="1.15"/></svg>
<span class="t" style="left:100.7px;top:258.79px;font-size:6.6px;line-height:8.25px;color:#fff;-webkit-text-stroke:0.18px;letter-spacing:0.109px;transform:translateX(-50%) scaleX(1.000);transform-origin:50% 50%;">Outlook</span>
<svg style="left:142.9px;top:237.7px;" width="18" height="18" viewBox="0 0 18 18"><linearGradient id="g21" x1="0" y1="0" x2="0" y2="1"><stop offset="0" stop-color="#ffffff"/><stop offset="1" stop-color="#e4e4e4"/></linearGradient><path d="M5 4.6V2.2Q5 1.2 6 1.2H12Q13 1.2 13 2.2V4.6" fill="none" stroke="#2aa8ee" stroke-width="1.05"/><path d="M.8 4.6Q.8 3.4 2 3.4H16Q17.2 3.4 17.2 4.6V15Q17.2 17.4 14.8 17.4H3.2Q.8 17.4 .8 15Z" fill="url(#g21)"/><rect x="5.3" y="6.9" width="3.4" height="3.4" fill="#f25022"/><rect x="9.3" y="6.9" width="3.4" height="3.4" fill="#7fba00"/><rect x="5.3" y="10.9" width="3.4" height="3.4" fill="#00a4ef"/><rect x="9.3" y="10.9" width="3.4" height="3.4" fill="#ffb900"/></svg>
<span class="t" style="left:151.9px;top:258.79px;font-size:6.6px;line-height:8.25px;color:#fff;-webkit-text-stroke:0.18px;letter-spacing:0.000px;transform:translateX(-50%) scaleX(0.992);transform-origin:50% 50%;">Microsoft Store</span>
<svg style="left:194.1px;top:237.7px;" width="18" height="18" viewBox="0 0 18 18"><linearGradient id="g22" x1="0" y1="0" x2="1" y2="1"><stop offset="0" stop-color="#1b8be8"/><stop offset="1" stop-color="#5a4fcf"/></linearGradient><rect x="1.4" y="1.4" width="15.2" height="15.2" rx="2.2" fill="url(#g22)"/><path d="M1.6 14.4L8.2 7.2Q9 6.4 9.8 7.2L16.4 14.4Q16.4 16.6 14.4 16.6H3.6Q1.6 16.6 1.6 14.4Z" fill="#35b8f5"/><path d="M6.4 16.6L11.4 11.2Q12 10.6 12.6 11.2L16.5 15Q16.2 16.6 14.4 16.6Z" fill="#1f8de6"/><path d="M12.6 3L13.1 4.3L14.4 4.8L13.1 5.3L12.6 6.6L12.1 5.3L10.8 4.8L12.1 4.3Z" fill="#fff"/></svg>
<span class="t" style="left:203.1px;top:258.79px;font-size:6.6px;line-height:8.25px;color:#fff;-webkit-text-stroke:0.18px;letter-spacing:0.000px;transform:translateX(-50%) scaleX(0.959);transform-origin:50% 50%;">Zdjęcia</span>
<svg style="left:245.2px;top:237.7px;" width="18" height="18" viewBox="0 0 18 18"><rect x="9" y="1.4" width="8" height="13" rx="1" transform="rotate(8 13 8)" fill="#1a6fd0"/><rect x="6.4" y="1" width="8.6" height="13.4" rx="1" transform="rotate(2 10 8)" fill="#44a6f0"/><rect x="2" y="2.2" width="10" height="14" rx="1" transform="rotate(-8 7 9)" fill="#f4f4f4"/><path d="M7 5.4C8.6 7.2 10.2 8.4 10.2 10C10.2 11.2 9 11.8 7.9 11.2L8.4 12.8H5.8L6.3 11.2C5.2 11.8 4 11.2 4 10C4 8.4 5.4 7.2 7 5.4Z" transform="rotate(-8 7 9)" fill="#141414"/><path d="M14.8 1V4.6M13 2.8H16.6" stroke="#cfe8ff" stroke-width=".9"/></svg>
<span class="t" style="left:254.2px;top:258.79px;font-size:6.6px;line-height:8.25px;color:#fff;-webkit-text-stroke:0.18px;letter-spacing:0.000px;transform:translateX(-50%) scaleX(0.998);transform-origin:50% 50%;">Solitaire &amp;</span>
<span class="t" style="left:254.2px;top:267.19px;font-size:6.6px;line-height:8.25px;color:#fff;-webkit-text-stroke:0.18px;letter-spacing:0.000px;transform:translateX(-50%) scaleX(0.917);transform-origin:50% 50%;">Casual Games</span>
<svg style="left:296.4px;top:237.7px;" width="18" height="18" viewBox="-9 -9 18 18"><rect x="-1.9" y="-8.6" width="3.8" height="4" rx=".8" transform="rotate(30)" fill="#7d8794"/><rect x="-1.9" y="-8.6" width="3.8" height="4" rx=".8" transform="rotate(90)" fill="#7d8794"/><rect x="-1.9" y="-8.6" width="3.8" height="4" rx=".8" transform="rotate(150)" fill="#7d8794"/><rect x="-1.9" y="-8.6" width="3.8" height="4" rx=".8" transform="rotate(210)" fill="#7d8794"/><rect x="-1.9" y="-8.6" width="3.8" height="4" rx=".8" transform="rotate(270)" fill="#7d8794"/><rect x="-1.9" y="-8.6" width="3.8" height="4" rx=".8" transform="rotate(330)" fill="#7d8794"/><circle r="6.6" fill="#7d8794"/><circle r="3.7" fill="#f2f4f7"/><circle r="2.8" fill="#1667c4"/></svg>
<span class="t" style="left:305.4px;top:258.79px;font-size:6.6px;line-height:8.25px;color:#fff;-webkit-text-stroke:0.18px;letter-spacing:0.000px;transform:translateX(-50%) scaleX(0.955);transform-origin:50% 50%;">Ustawienia</span>
<svg style="left:40.6px;top:282.7px;" width="18" height="18" viewBox="0 0 18 18"><linearGradient id="g23" x1="0" y1="0" x2="1" y2="1"><stop offset="0" stop-color="#45c8f0"/><stop offset="1" stop-color="#1f8fe0"/></linearGradient><path d="M9.4 1C14 1 17 3.8 17 7.6C17 10.6 14.6 11.6 12.6 11.4C11 11.2 10.4 12.4 11 13.6C11.8 15.4 10.6 17 8.2 17C3.8 17 1 13.6 1 9.6C1 4.6 4.6 1 9.4 1Z" fill="url(#g23)"/><circle cx="5.4" cy="5.6" r="1.5" fill="#4cc44a"/><circle cx="9.4" cy="3.8" r="1.5" fill="#f7c81e"/><circle cx="3.6" cy="9.4" r="1.5" fill="#f0532a"/><circle cx="7" cy="11.6" r="1.2" fill="#0d4a9a"/><rect x="12.6" y="6.6" width="1.6" height="10.4" fill="#b5713a"/><path d="M12.2 3.4H14.6L14.2 7.2H12.6Z" fill="#f4d9a8"/></svg>
<span class="t" style="left:49.6px;top:303.79px;font-size:6.6px;line-height:8.25px;color:#fff;-webkit-text-stroke:0.18px;letter-spacing:0.000px;transform:translateX(-50%) scaleX(0.931);transform-origin:50% 50%;">Paint</span>
<svg style="left:91.7px;top:282.7px;" width="18" height="18" viewBox="0 0 18 18"><rect x="1.6" y="1.6" width="14.8" height="14.8" rx=".8" fill="#0a66c2"/><text x="9.1" y="13.4" font-family="Liberation Sans, sans-serif" font-size="11" font-weight="700" fill="#fff" text-anchor="middle">in</text></svg>
<span class="t" style="left:100.7px;top:303.79px;font-size:6.6px;line-height:8.25px;color:#fff;-webkit-text-stroke:0.18px;letter-spacing:0.000px;transform:translateX(-50%) scaleX(0.974);transform-origin:50% 50%;">LinkedIn</span>
<svg style="left:142.9px;top:282.7px;" width="18" height="18" viewBox="0 0 18 18"><rect x="3" y=".6" width="12" height="16.8" rx="1.2" fill="#6d7a88"/><rect x="4.2" y="2.2" width="9.6" height="3.2" fill="#3fd0f2"/><rect x="4.2" y="6.8" width="2.6" height="2.6" fill="#d6dde4"/><rect x="7.5" y="6.8" width="2.6" height="2.6" fill="#d6dde4"/><rect x="10.8" y="6.8" width="2.6" height="2.6" fill="#d6dde4"/><rect x="4.2" y="10.1" width="2.6" height="2.6" fill="#d6dde4"/><rect x="7.5" y="10.1" width="2.6" height="2.6" fill="#d6dde4"/><rect x="4.2" y="13.399999999999999" width="2.6" height="2.6" fill="#d6dde4"/><rect x="7.5" y="13.399999999999999" width="2.6" height="2.6" fill="#d6dde4"/><rect x="10.8" y="10.1" width="2.9" height="5.9" fill="#16479a"/></svg>
<span class="t" style="left:151.9px;top:303.79px;font-size:6.6px;line-height:8.25px;color:#fff;-webkit-text-stroke:0.18px;letter-spacing:0.000px;transform:translateX(-50%) scaleX(0.989);transform-origin:50% 50%;">Kalkulator</span>
<svg style="left:194.1px;top:282.7px;" width="18" height="18" viewBox="0 0 18 18"><path d="M.6 17V9Q.6 .6 9 .6Q17.4 .6 17.4 9V17Z" fill="#8a929c"/><circle cx="9" cy="8.8" r="7.2" fill="#f1f1f1"/><path d="M9 9L5.2 6.8M9 9L12.4 5.4" stroke="#1a1a1a" stroke-width="1.1" stroke-linecap="round"/><path d="M9 9V14.6" stroke="#e8502a" stroke-width="1"/></svg>
<span class="t" style="left:203.1px;top:303.79px;font-size:6.6px;line-height:8.25px;color:#fff;-webkit-text-stroke:0.18px;letter-spacing:0.000px;transform:translateX(-50%) scaleX(0.946);transform-origin:50% 50%;">Zegar</span>
<svg style="left:245.2px;top:282.7px;" width="18" height="18" viewBox="0 0 18 18"><rect x="2.6" y="1.6" width="12.8" height="15.4" rx="1" fill="#c8692e"/><rect x="2.6" y="1.6" width="12.8" height="14.4" rx="1" fill="#4cc2ea"/><path d="M4.6 .8V2.6M6.8 .8V2.6M9 .8V2.6M11.2 .8V2.6M13.4 .8V2.6" stroke="#1e8fc4" stroke-width=".8"/><path d="M4.8 5.8H13.2M4.8 8.2H13.2M4.8 10.6H13.2" stroke="#1e7fb0" stroke-width="1.1"/></svg>
<span class="t" style="left:254.2px;top:303.79px;font-size:6.6px;line-height:8.25px;color:#fff;-webkit-text-stroke:0.18px;letter-spacing:0.050px;transform:translateX(-50%) scaleX(1.000);transform-origin:50% 50%;">Notatnik</span>
<svg style="left:296.4px;top:282.7px;" width="19" height="18" viewBox="0 0 19 18"><rect x=".6" y=".6" width="12.8" height="12.8" rx="1.4" fill="#efefef"/><rect x="3.6" y="3.6" width="8" height="8" fill="#c2c7cf"/><g fill="#f0531e"><rect x="1.6" y="1.6" width="1.6" height="1.6"/><rect x="4.4" y="1.6" width="1.6" height="1.6"/><rect x="7.2" y="1.6" width="1.6" height="1.6"/><rect x="10" y="1.6" width="1.6" height="1.6"/><rect x="1.6" y="4.4" width="1.6" height="1.6"/><rect x="1.6" y="7.2" width="1.6" height="1.6"/><rect x="1.6" y="10" width="1.6" height="1.6"/></g><path d="M4 11L12.4 11.6L16 9.4M10.6 4L11 13L9.6 15" stroke="#9aa0a8" stroke-width="1" fill="none"/><circle cx="16.6" cy="9" r="1.5" fill="none" stroke="#1b9be8" stroke-width="1.2"/><circle cx="10" cy="15.8" r="1.5" fill="none" stroke="#1b9be8" stroke-width="1.2"/></svg>
<span class="t" style="left:305.4px;top:303.79px;font-size:6.6px;line-height:8.25px;color:#fff;-webkit-text-stroke:0.18px;letter-spacing:0.000px;transform:translateX(-50%) scaleX(0.960);transform-origin:50% 50%;">Narzędzie</span>
<span class="t" style="left:305.4px;top:312.19px;font-size:6.6px;line-height:8.25px;color:#fff;-webkit-text-stroke:0.18px;letter-spacing:0.000px;transform:translateX(-50%) scaleX(0.975);transform-origin:50% 50%;">Wycinanie</span>
<svg style="left:40.8px;top:328.7px;" width="17.6" height="15.6" viewBox="0 0 18 16"><linearGradient id="g24" x1="0" y1="0" x2="0" y2="1"><stop offset="0" stop-color="#ffd75e"/><stop offset="1" stop-color="#f5b91a"/></linearGradient><path d="M0 1.2Q0 0 1.2 0H6L7.6 1.6H16.8Q18 1.6 18 2.8V5H0Z" fill="#e8a414"/><path d="M0 3.6H6.4L8 2.2H16.8Q18 2.2 18 3.4V14.8Q18 16 16.8 16H1.2Q0 16 0 14.8Z" fill="url(#g24)"/><path d="M3.1 16V11.4Q3.1 9.8 4.7 9.8H13.3Q14.9 9.8 14.9 11.4V16Z" fill="#1673d0"/><rect x="5.6" y="11.5" width="6.8" height="1" rx=".5" fill="#3fa4f0"/></svg>
<span class="t" style="left:49.6px;top:348.59px;font-size:6.6px;line-height:8.25px;color:#fff;-webkit-text-stroke:0.18px;letter-spacing:0.000px;transform:translateX(-50%) scaleX(0.971);transform-origin:50% 50%;">Eksplorator</span>
<span class="t" style="left:49.6px;top:356.99px;font-size:6.6px;line-height:8.25px;color:#fff;-webkit-text-stroke:0.18px;letter-spacing:0.045px;transform:translateX(-50%) scaleX(1.000);transform-origin:50% 50%;">plików</span>
<span class="t" style="left:40.6px;top:429.99px;font-size:7.3px;line-height:9.12px;color:#fff;font-weight:700;-webkit-text-stroke:0.1px;letter-spacing:0.000px;transform:scaleX(0.978);transform-origin:0 50%;">Proponowane</span>
<span class="t" style="left:40.6px;top:448.57px;font-size:6.4px;line-height:8.0px;color:#d6d6d6;-webkit-text-stroke:0.18px;letter-spacing:0.047px;">Aby wyświetlić ostatnio używane pliki i nowe aplikacje, włącz je w ustawieniach. <span style="position:static;color:#bd98d0;text-decoration:underline;text-decoration-thickness:0.55px;text-underline-offset:0.6px;">Uruchom</span></span>
<span class="t" style="left:40.6px;top:457.57px;font-size:6.4px;line-height:8.0px;color:#d6d6d6;-webkit-text-stroke:0.18px;letter-spacing:0.016px;"><span style="position:static;color:#bd98d0;text-decoration:underline;text-decoration-thickness:0.55px;text-underline-offset:0.6px;">ustawienia uruchamiania.</span></span>
<svg style="left:40.2px;top:517.6px;" width="18" height="18" viewBox="-9 -9 18 18"><circle r="8.7" fill="#f4f4f4"/><circle cx="0" cy="-2.4" r="2.5" fill="#9a9a9a"/><path d="M-4.2 1.2H4.2V2.6Q4.2 4.8 0 4.8Q-4.2 4.8 -4.2 2.6Z" fill="#9a9a9a"/></svg>
<svg style="left:303.8px;top:520.5px;" width="12" height="12" viewBox="-6 -6 12 12"><path d="M-2.4 -3.2A4.2 4.2 0 1 0 2.4 -3.2" stroke="#d8d8d8" stroke-width=".85" fill="none" stroke-linecap="round"/><path d="M0 -4.6V-.6" stroke="#d8d8d8" stroke-width=".85" stroke-linecap="round"/></svg>
<div style="left:0px;top:550px;width:1024px;height:26px;background:#1c1c1c;"></div>
<div style="left:0px;top:550px;width:1024px;height:0.6px;background:#242424;"></div>
<div style="left:6px;top:552px;width:22px;height:22px;background:#2a2a2a;border-radius:3px;"></div>
<svg style="left:11.0px;top:557.1px;" width="12.8" height="12.8" viewBox="0 0 12.8 12.8"><linearGradient id="g25" x1="0" y1="0" x2="1" y2="1"><stop offset="0" stop-color="#6fe0fb"/><stop offset="1" stop-color="#1f9cf2"/></linearGradient><g fill="url(#g25)"><rect x="0" y="0" width="6.0" height="6.0" rx=".4"/><rect x="6.8" y="0" width="6.0" height="6.0" rx=".4"/><rect x="0" y="6.8" width="6.0" height="6.0" rx=".4"/><rect x="6.8" y="6.8" width="6.0" height="6.0" rx=".4"/></g></svg>
<svg style="left:34.6px;top:557px;" width="13.2" height="11.8" viewBox="0 0 18 16"><linearGradient id="g26" x1="0" y1="0" x2="0" y2="1"><stop offset="0" stop-color="#ffd75e"/><stop offset="1" stop-color="#f5b91a"/></linearGradient><path d="M0 1.2Q0 0 1.2 0H6L7.6 1.6H16.8Q18 1.6 18 2.8V5H0Z" fill="#e8a414"/><path d="M0 3.6H6.4L8 2.2H16.8Q18 2.2 18 3.4V14.8Q18 16 16.8 16H1.2Q0 16 0 14.8Z" fill="url(#g26)"/><path d="M3.1 16V11.4Q3.1 9.8 4.7 9.8H13.3Q14.9 9.8 14.9 11.4V16Z" fill="#1673d0"/><rect x="5.6" y="11.5" width="6.8" height="1" rx=".5" fill="#3fa4f0"/></svg>
<div style="left:39.4px;top:571.7px;width:3.5px;height:1px;background:#a4a4a4;border-radius:1px;"></div>
<svg style="left:57.6px;top:556.3px;" width="14" height="14" viewBox="-7 -7 14 14"><clipPath id="ccg27"><circle r="6.5"/></clipPath><g clip-path="url(#ccg27)"><path d="M0 0L-5.63 -3.25L-7 -8H7L5.63 -3.25Z" fill="#e23f30"/><path d="M0 0L5.63 -3.25L8 -3L2 8L0 6.5Z" fill="#fbc116"/><path d="M0 0L0 6.5L1 8H-8V-6L-5.63 -3.25Z" fill="#2da44e"/></g><circle r="3" fill="#fff"/><circle r="2.35" fill="#3b80ee"/></svg>
<svg style="left:81px;top:555.8px;" width="14" height="14.5" viewBox="-7 -7.5 14 14.5"><linearGradient id="g28" x1="1" y1="0" x2="0" y2="1"><stop offset="0" stop-color="#ffe226"/><stop offset=".45" stop-color="#ff7a1a"/><stop offset="1" stop-color="#e8207a"/></linearGradient><radialGradient id="g29"><stop offset="0" stop-color="#9059ff"/><stop offset="1" stop-color="#5b2fd0"/></radialGradient><path d="M2 -7C4.4 -5.6 6.4 -2.8 6.4 .6C6.4 4.2 3.6 6.8 0 6.8C-3.6 6.8 -6.4 4.2 -6.4 .6C-6.4 -1.6 -5.6 -3 -4.6 -4.2C-4.4 -3.4 -4 -2.8 -3.4 -2.4C-2.6 -3.6 -1 -4 .4 -3.4C1.4 -4.4 2 -5.6 2 -7Z" fill="url(#g28)"/><circle cx="-.4" cy="1" r="2.6" fill="url(#g29)"/><path d="M-3.4 -1.2C-2.4 -2.2 -.6 -2.2 .4 -1.4C-.6 -1.4 -1.2 -1 -1.4 -.2C-2 .4 -3 .2 -3.4 -1.2Z" fill="#ff9a1e"/></svg>
<svg style="left:104.3px;top:556.3px;" width="14" height="14" viewBox="-7 -7 14 14"><circle r="5.9" fill="#232327" stroke="#d6d6d6" stroke-width="1"/><g fill="none" stroke="#cfcfcf" stroke-width=".8"><path d="M.2 -.4C-1.6 -2.2 -1 -4.6 .8 -5.4"/><path d="M.2 -.4C2.8 -.8 4.6 .8 4.2 3"/><path d="M.2 -.4C-.8 2 -3.2 2.8 -4.8 1.6"/></g></svg>
<svg style="left:127.7px;top:556.3px;" width="14" height="14" viewBox="-7 -7 14 14"><linearGradient id="g30" x1="0" y1="0" x2="0" y2="1"><stop offset="0" stop-color="#13234e"/><stop offset="1" stop-color="#1a86c4"/></linearGradient><circle r="6.4" fill="url(#g30)"/><circle cx="2.4" cy="-1.8" r="2.2" fill="none" stroke="#fff" stroke-width=".7"/><circle cx="2.4" cy="-1.8" r="1.35" fill="#fff"/><path d="M-6.2 .2L-1.6 2.2L1 -.4L2.6 .8L-.6 3.6C-1 5 -3 5.2 -3.6 3.8L-6.4 2.4Z" fill="#fff"/></svg>
<svg style="left:151.2px;top:556.3px;" width="14" height="14" viewBox="-7 -7 14 14"><clipPath id="ccg31"><circle r="6.5"/></clipPath><g clip-path="url(#ccg31)"><path d="M0 0L-5.63 -3.25L-7 -8H7L5.63 -3.25Z" fill="#e23f30"/><path d="M0 0L5.63 -3.25L8 -3L2 8L0 6.5Z" fill="#fbc116"/><path d="M0 0L0 6.5L1 8H-8V-6L-5.63 -3.25Z" fill="#2da44e"/></g><circle r="3" fill="#fff"/><circle r="2.35" fill="#3b80ee"/><circle cx="3.7" cy="-3.9" r="2.7" fill="#0c0c0c"/></svg>
<div style="left:157.0px;top:571.7px;width:2.5px;height:1px;background:#9a9a9a;border-radius:1px;"></div>
<svg style="left:924.0px;top:560.0px;" width="7.0" height="7.0" viewBox="-3.5 -3.5 7.0 7.0"><path transform="rotate(270)" d="M-1.25 -2.5L1.25 0L-1.25 2.5" stroke="#f4f4f4" stroke-width="1.0" fill="none" stroke-linecap="round" stroke-linejoin="round"/></svg>
<svg style="left:939.4px;top:558.3px;" width="10" height="10" viewBox="-5 -5 10 10"><rect x="-4.1" y="-3.5" width="6.3" height="5.9" rx=".4" fill="none" stroke="#ededed" stroke-width=".8"/><path d="M-2.2 4.1H2.4" stroke="#ededed" stroke-width=".8" stroke-dasharray="1 .5"/><rect x="2.3" y="-3.7" width="1.7" height="3.1" rx=".5" fill="#1c1c1c" stroke="#ededed" stroke-width=".65"/><path d="M3.15 -.6V3.4" stroke="#ededed" stroke-width=".65" fill="none"/></svg>
<svg style="left:951.6px;top:558.3px;" width="10" height="10" viewBox="-5 -5 10 10"><path d="M-3.6 -1.2H-2.2L-.2 -3V3L-2.2 1.2H-3.6Z" fill="none" stroke="#f0f0f0" stroke-width=".75" stroke-linejoin="round"/><path d="M1.2 -1.6Q2 0 1.2 1.6" stroke="#f0f0f0" stroke-width=".7" fill="none"/><path d="M2.6 -2.6Q3.8 0 2.6 2.6" stroke="#7a7a7a" stroke-width=".7" fill="none"/></svg>
<svg style="left:964.5px;top:558.3px;" width="11" height="10" viewBox="-5.5 -5 11 10"><linearGradient id="g32" x1="0" y1="0" x2="0" y2="1"><stop offset="0" stop-color="#ffffff"/><stop offset="1" stop-color="#cfcfcf"/></linearGradient><path d="M-4.6 -1.6Q-4.6 -2.2 -4 -2.2H2.6L4.4 .2L2.6 2.6H-4Q-4.6 2.6 -4.6 2Z" fill="url(#g32)"/><path d="M-4.2 -3.6L-2.8 -3.6L-2 -2L-4.2 -1.6Z" fill="#f0f0f0"/><path d="M-3.4 -1.6L-1.6 .2" stroke="#555" stroke-width=".5"/></svg>
<span class="t" style="right:10.2px;top:555.47px;font-size:6.4px;line-height:8.0px;color:#fff;-webkit-text-stroke:0.18px;letter-spacing:0.000px;transform:scaleX(0.938);transform-origin:100% 50%;">14:22</span>
<span class="t" style="right:10.2px;top:563.97px;font-size:6.4px;line-height:8.0px;color:#fff;-webkit-text-stroke:0.18px;letter-spacing:0.000px;transform:scaleX(0.969);transform-origin:100% 50%;">31.01.2026</span>
</div>
</body>
</html>
